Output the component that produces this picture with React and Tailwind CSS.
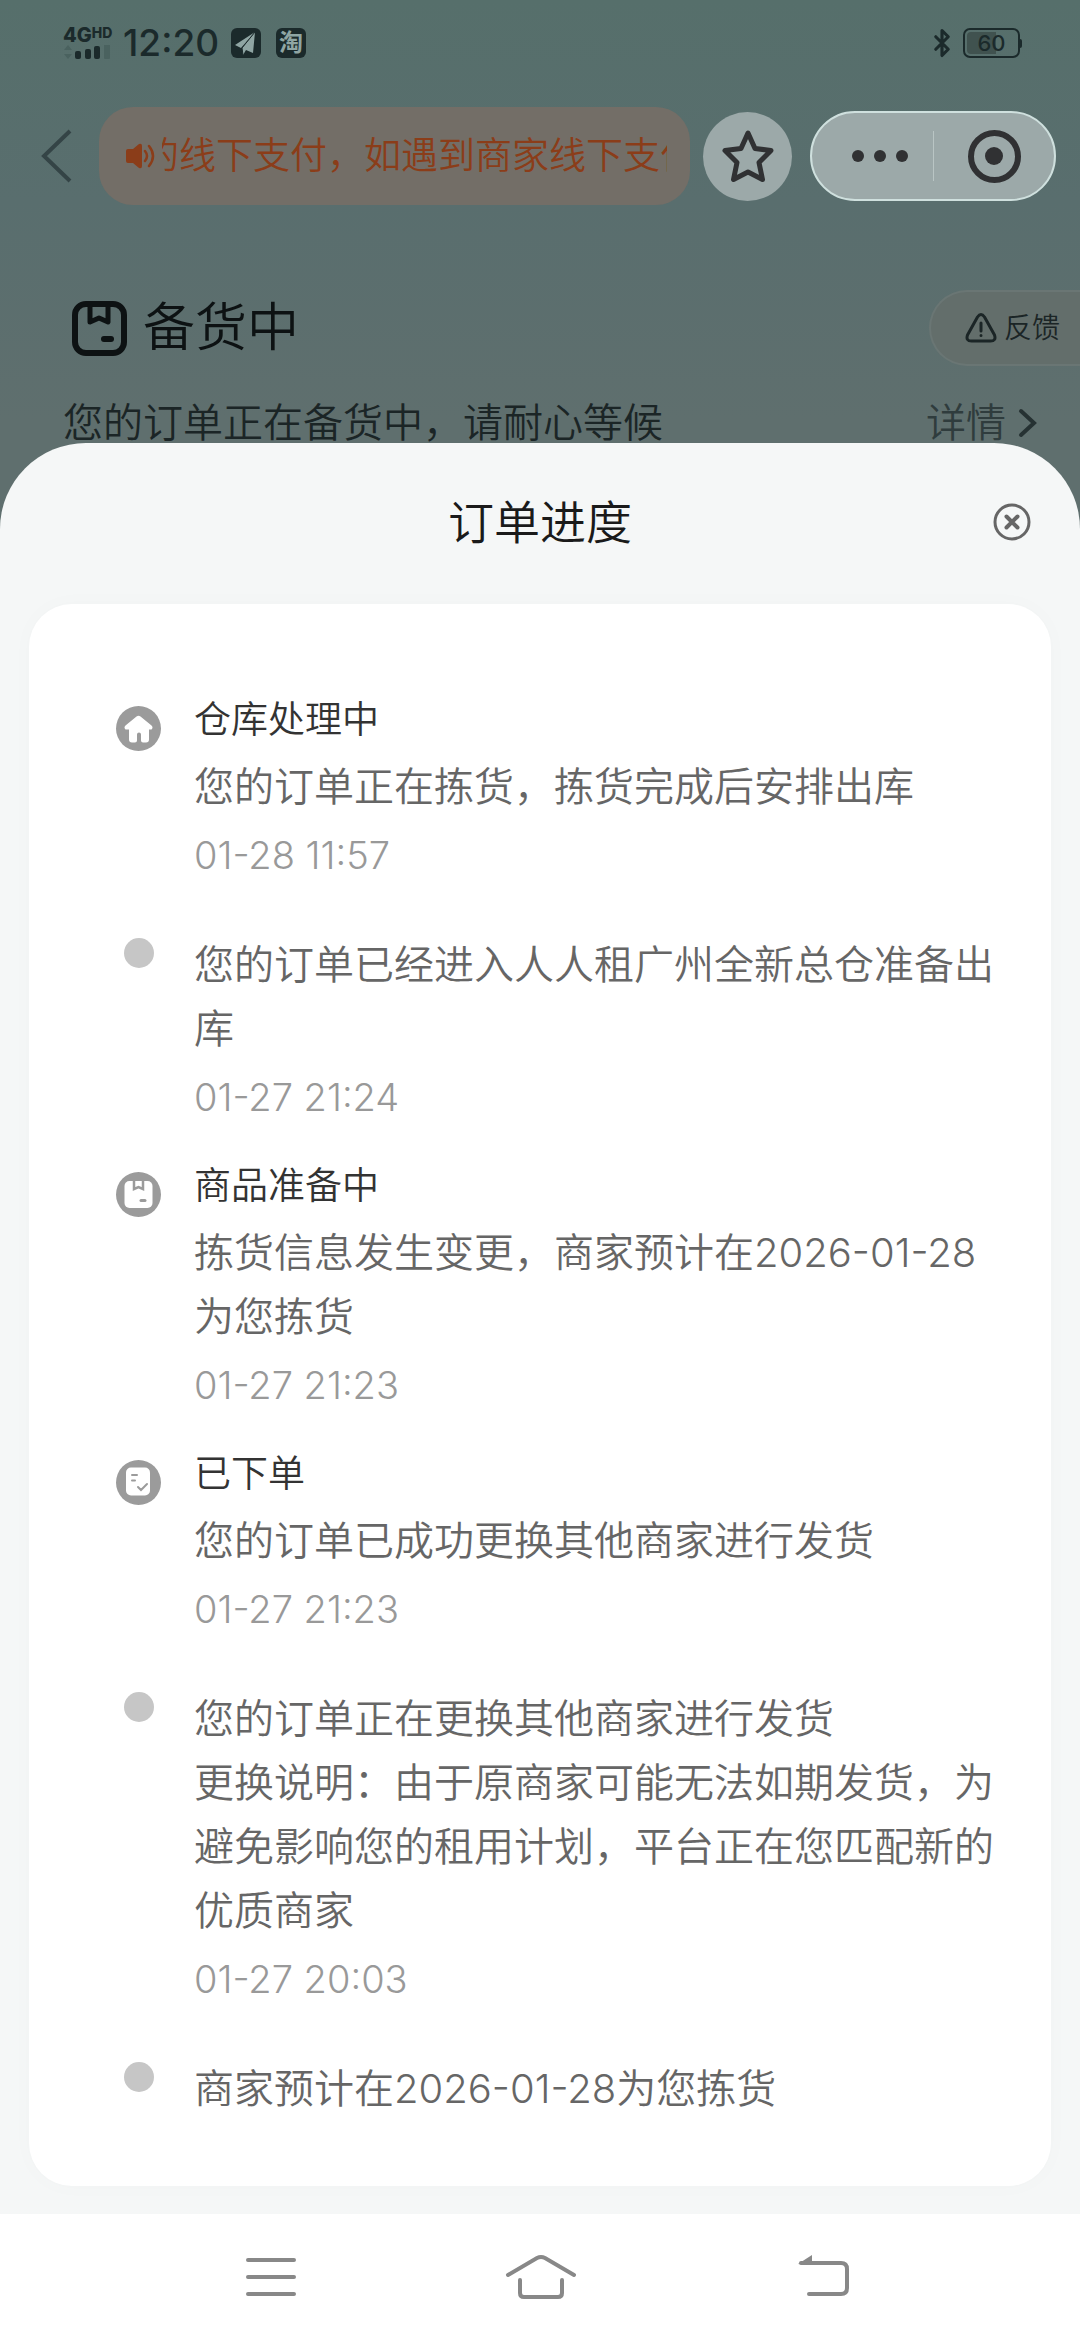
import React from "react";
import { Bluetooth } from "lucide-react";

const steps = [
  {
    icon: "house",
    title: "仓库处理中",
    lines: ["您的订单正在拣货，拣货完成后安排出库"],
    time: "01-28 11:57",
  },
  {
    lines: ["您的订单已经进入人人租广州全新总仓准备出库"],
    time: "01-27 21:24",
  },
  {
    icon: "box",
    title: "商品准备中",
    lines: ["拣货信息发生变更，商家预计在2026-01-28为您拣货"],
    time: "01-27 21:23",
  },
  {
    icon: "order",
    title: "已下单",
    lines: ["您的订单已成功更换其他商家进行发货"],
    time: "01-27 21:23",
  },
  {
    lines: [
      "您的订单正在更换其他商家进行发货",
      "更换说明：由于原商家可能无法如期发货，为避免影响您的租用计划，平台正在您匹配新的优质商家",
    ],
    time: "01-27 20:03",
  },
  {
    lines: ["商家预计在2026-01-28为您拣货"],
  },
];

const StatusBar = () => (
  <div className="flex h-[86px] items-center justify-between pl-[63px] pr-[58px] text-[#1b2a2b]">
    <div className="flex items-center">
      <div className="w-[48px]">
        <div className="flex items-start font-extrabold">
          <span className="text-[20px] leading-[16px]">4G</span>
          <span className="text-[14px] leading-[11px]">HD</span>
        </div>
        <svg width="48" height="14" viewBox="0 0 48 14" className="mt-[2px]">
          <path d="M5 0l4 5H1zM5 14l4-5H1z" fill="#4a625f" />
          <rect x="12" y="6" width="6" height="8" rx="2" fill="currentColor" />
          <rect x="22" y="4" width="6" height="10" rx="2" fill="currentColor" />
          <rect x="31" y="1" width="6" height="13" rx="2" fill="currentColor" />
          <rect x="41" y="-1" width="6" height="15" rx="1" fill="#4a625f" />
        </svg>
      </div>
      <span className="ml-[12px] text-[37px] font-medium leading-[40px]">
        12:20
      </span>
      <svg width="30" height="30" viewBox="0 0 30 30" className="ml-[12px]">
        <rect width="30" height="30" rx="6" fill="#1b2a2b" />
        <path d="M24 4L4 17l6 3z" fill="#8fa5a3" />
        <path d="M24 4L11 20l1 7 3-5 7 3z" fill="#8fa5a3" />
        <path d="M24 4L11 20l1 7" fill="none" stroke="#1b2a2b" strokeWidth="1" />
      </svg>
      <span className="ml-[15px] flex h-[30px] w-[30px] items-center justify-center rounded-[6px] bg-[#1b2a2b] text-[24px] font-bold leading-[30px] text-[#8fa5a3]">
        淘
      </span>
    </div>
    <div className="flex items-center">
      <Bluetooth className="h-[34px] w-[30px]" strokeWidth={2.5} />
      <div className="relative ml-[6px] flex h-[30px] w-[57px] items-center justify-center rounded-[7px] border-2 border-[#1b2a2b]">
        <div className="absolute inset-y-[2px] left-[2px] w-[29px] rounded-l-[4px] bg-[#40524f]" />
        <span className="relative text-[22px] font-medium leading-[26px]">
          60
        </span>
      </div>
      <div className="h-[9px] w-[2px] rounded-r bg-[#1b2a2b]" />
    </div>
  </div>
);

const TopBar = () => (
  <div className="mt-[21px] flex items-center pr-[24px]">
    <button aria-label="返回" className="flex h-[98px] w-[99px] items-center pl-[40px]">
      <svg width="32" height="54" viewBox="0 0 32 54">
        <path d="M30 2L4 27l26 25" fill="none" stroke="#344446" strokeWidth="4" />
      </svg>
    </button>
    <div className="flex h-[98px] min-w-0 flex-1 items-center rounded-[34px] bg-[#736e67] pl-[27px] pr-[23px]">
      <svg width="30" height="26" viewBox="0 0 30 26" className="mr-[6px] shrink-0">
        <path
          d="M2 6h5l6-5q3-1 3 2v20q0 3-3 2l-6-5H2q-2 0-2-2V8q0-2 2-2z"
          fill="#8b3d19"
        />
        <path
          d="M19 8q4 5 0 10M23 3q8 10 0 20"
          fill="none"
          stroke="#8b3d19"
          strokeWidth="2.5"
          strokeLinecap="round"
        />
      </svg>
      <div className="min-w-0 flex-1 overflow-hidden whitespace-nowrap">
        <p className="-ml-5 text-[37px] leading-[50px] text-[#8b3d19]">
          的线下支付，如遇到商家线下支付
        </p>
      </div>
    </div>
    <button
      aria-label="收藏"
      className="ml-[13px] flex h-[89px] w-[89px] items-center justify-center rounded-full bg-[#9ca9a9]"
    >
      <svg width="54" height="54" viewBox="0 0 54 54">
        <path
          d="M27 4l7 15.500 16 2-12 12 3.500 17L27 43l-14.500 7.500L16 33.500l-12-12 16-2z"
          fill="none"
          stroke="#303133"
          strokeWidth="5"
          strokeLinejoin="round"
        />
      </svg>
    </button>
    <div className="ml-[18px] flex h-[90px] w-[246px] items-center rounded-full border-2 border-[#cfe0de] bg-[#9ca9a9]">
      <button
        aria-label="更多"
        className="flex h-full w-[121px] items-center justify-center gap-[10px] pl-[14px]"
      >
        <i className="h-[12px] w-[12px] rounded-full bg-[#303133]" />
        <i className="h-[12px] w-[12px] rounded-full bg-[#303133]" />
        <i className="h-[12px] w-[12px] rounded-full bg-[#303133]" />
      </button>
      <div className="h-[50px] w-px bg-[#b9c5c4]" />
      <button aria-label="关闭小程序" className="flex h-full flex-1 items-center justify-center">
        <span className="flex h-[53px] w-[53px] items-center justify-center rounded-full border-[6px] border-[#303133]">
          <i className="h-[18px] w-[18px] rounded-full bg-[#303133]" />
        </span>
      </button>
    </div>
  </div>
);

const OrderStatus = () => (
  <>
    <div className="mt-[85px] flex items-center justify-between pl-[72px]">
      <div className="flex items-center">
        <svg width="55" height="55" viewBox="0 0 55 55" fill="none" stroke="#0d1213">
          <rect x="3" y="3" width="49" height="49" rx="11" strokeWidth="6" />
          <path d="M18 4v17l9-4 9 4V4" strokeWidth="5" strokeLinejoin="round" />
          <path d="M32 38h7" strokeWidth="6" strokeLinecap="round" />
        </svg>
        <h1 className="ml-4 text-[52px] leading-[76px] text-[#0d1213]">
          备货中
        </h1>
      </div>
      <button className="flex h-[76px] w-[151px] items-center rounded-l-full border-2 border-r-0 border-[#6a7674] bg-[#636e6b] pl-[34px] text-[#1b2526]">
        <svg width="32" height="30" viewBox="0 0 32 30" fill="none" stroke="currentColor" strokeLinecap="round" strokeWidth="3">
          <path
            d="M12.500 4q3.500-5 7 0l10 18q2 6-4 6h-19q-6 0-4-6z"
            strokeLinejoin="round"
          />
          <path d="M16 10v8M16 22.500v.1" />
        </svg>
        <span className="ml-[7px] text-[28px] leading-[40px]">反馈</span>
      </button>
    </div>
    <div className="mt-[37px] flex justify-between pl-[63px] pr-[42px] text-[40px] leading-[40px]">
      <p className="text-[#1b2526]">您的订单正在备货中，请耐心等候</p>
      <a href="#detail" className="flex items-center text-[#2f3c3d]">
        详情
        <svg width="20" height="30" viewBox="0 0 20 30" className="ml-[12px]">
          <path
            d="M3 3l13 12L3 27"
            fill="none"
            stroke="#263233"
            strokeWidth="4"
            strokeLinecap="round"
          />
        </svg>
      </a>
    </div>
  </>
);

const StepIcon = ({ icon }) => {
  if (!icon) {
    return <i className="h-[30px] w-[30px] rounded-full bg-[#c6c6c6]" />;
  }
  return (
    <svg width="45" height="45" viewBox="0 0 45 45">
      <circle cx="22.500" cy="22.500" r="22.500" fill="#9b9b9b" />
      {icon === "house" && (
        <path
          d="M20.500 10.500q2-1.500 4 0l11 9q2 2 0 4h-2.500v10q0 3-3 3h-3q-2 0-2-2v-6q0-2-2-2t-2 2v6q0 2-2 2h-3q-3 0-3-3v-10H9.500q-2-2 0-4z"
          fill="#fff"
        />
      )}
      {icon === "box" && (
        <>
          <rect x="8.500" y="9" width="28" height="27" rx="5" fill="#fff" />
          <path
            d="M18 8v9l4.500-2 4.500 2V8"
            fill="none"
            stroke="#9b9b9b"
            strokeWidth="2.500"
          />
          <path d="M25 28.500h4" stroke="#9b9b9b" strokeWidth="3" strokeLinecap="round" />
        </>
      )}
      {icon === "order" && (
        <>
          <rect x="10" y="7.500" width="24" height="28" rx="5" fill="#fff" />
          <path
            d="M16 15h5M16 20.500h3M22 27l3 3 6-6"
            fill="none"
            stroke="#9b9b9b"
            strokeWidth="2"
            strokeLinecap="round"
          />
        </>
      )}
    </svg>
  );
};

const Step = ({ step }) => (
  <li className="flex">
    <div className="mt-[14px] mr-[33px] flex h-[45px] w-[45px] shrink-0 items-center justify-center">
      <StepIcon icon={step.icon} />
    </div>
    <div className={step.title ? "min-w-0 flex-1" : "min-w-0 flex-1 pt-[17px]"}>
      {step.title && (
        <h3 className="mb-[7px] text-[37px] leading-[56px] text-[#333333]">
          {step.title}
        </h3>
      )}
      {step.lines.map((line, index) => (
        <p key={index} className="break-all text-[40px] leading-[64px] text-[#666666]">
          {line}
        </p>
      ))}
      {step.time && (
        <time className="mt-2 block text-[38px] leading-[57px] text-[#999999]">
          {step.time}
        </time>
      )}
    </div>
  </li>
);

const ProgressSheet = () => (
  <section className="flex flex-1 flex-col rounded-t-[86px] bg-[#f5f7f7] px-[29px] pb-[28px]">
    <header className="relative flex h-[161px] items-center justify-center pb-1">
      <h2 className="text-[46px] leading-[60px] text-[#1a1a1a]">订单进度</h2>
      <button aria-label="关闭" className="absolute right-[20px]">
        <svg width="38" height="38" viewBox="0 0 38 38" fill="none" stroke="#666">
          <circle cx="19" cy="19" r="17" strokeWidth="3" />
          <path d="M13.500 13.500l11 11M24.500 13.500l-11 11" strokeWidth="4" strokeLinecap="round" />
        </svg>
      </button>
    </header>
    <ol className="flex flex-1 flex-col gap-8 rounded-[43px] bg-white pb-[60px] pl-[87px] pr-[48px] pt-[88px] shadow-[0_0_24px_rgba(0,0,0,0.02)]">
      {steps.map((step, index) => (
        <Step key={index} step={step} />
      ))}
    </ol>
  </section>
);

const NavBar = () => (
  <nav className="flex h-[126px] items-center justify-center gap-[192px] bg-white">
    <button aria-label="最近任务">
      <svg width="80" height="46" viewBox="0 0 80 46">
        <path d="M20 6h46M20 23h46M20 40h46" stroke="#888" strokeWidth="4" strokeLinecap="round" />
      </svg>
    </button>
    <button aria-label="主屏幕">
      <svg width="80" height="46" viewBox="0 0 80 46" fill="none" stroke="#888" strokeWidth="4" strokeLinecap="round">
        <path d="M8 21L37 4q4-2 8 0l29 17" />
        <path d="M20 26v13q0 4 4 4h34q4 0 4-4V26" />
      </svg>
    </button>
    <button aria-label="返回上一页">
      <svg width="80" height="46" viewBox="0 0 80 46">
        <path
          d="M29 9h40q6 0 6 6v19q0 6-6 6H37"
          fill="none"
          stroke="#888"
          strokeWidth="4"
          strokeLinecap="round"
        />
        <path d="M26 10L40 1v10z" fill="#888" />
      </svg>
    </button>
  </nav>
);

function App() {
  return (
    <div className="flex min-h-screen flex-col overflow-x-hidden bg-[linear-gradient(to_bottom,#566f6b_0px,#596e6e_200px,#5f6f6e_420px,#5f6f6e_100%)] font-['Inter','Noto_Sans_CJK_SC',sans-serif] font-[350]">
      <StatusBar />
      <TopBar />
      <OrderStatus />
      <ProgressSheet />
      <NavBar />
    </div>
  );
}

export default App;
